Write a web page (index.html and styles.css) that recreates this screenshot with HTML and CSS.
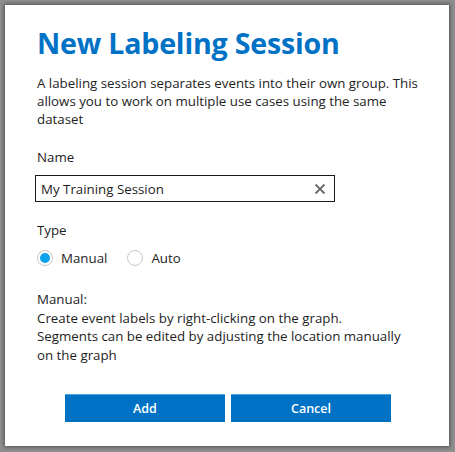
FILE: index.html
```html
<!DOCTYPE html>
<html>
<head>
<meta charset="utf-8">
<link rel="stylesheet" href="styles.css">
</head>
<body>
<div class="dialog">
  <h1 class="title">New Labeling Session</h1>
  <p class="desc">A labeling session separates events into their own group. This allows you to work on multiple use cases using the same dataset</p>
  <div class="field-label name-label">Name</div>
  <div class="input">
    <span class="input-text">My Training Session</span>
    <svg class="clear" width="12" height="12" viewBox="0 0 12 12"><path d="M1.5 1.5 L10.5 10.5 M10.5 1.5 L1.5 10.5" stroke="#6b6b6b" stroke-width="1.8" fill="none"/></svg>
  </div>
  <div class="field-label type-label">Type</div>
  <div class="radios">
    <label class="radio"><span class="circle checked"><span class="dot"></span></span>Manual</label>
    <label class="radio"><span class="circle"></span>Auto</label>
  </div>
  <div class="help">
    <div>Manual:</div>
    <div>Create event labels by right-clicking on the graph.</div>
    <div>Segments can be edited by adjusting the location manually on the graph</div>
  </div>
  <div class="buttons">
    <button class="btn">Add</button>
    <button class="btn">Cancel</button>
  </div>
</div>
</body>
</html>
```
FILE: styles.css
```css
html, body {
  margin: 0;
  padding: 0;
}
body {
  background: #8f8f8f;
  width: 455px;
  height: 452px;
  overflow: hidden;
  font-family: "Open Sans", "Noto Sans", sans-serif;
  color: #1e1e1e;
}
.dialog {
  margin: 5px 0 0 5px;
  width: 444px;
  height: 441px;
  box-sizing: border-box;
  background: #fff;
  box-shadow: 0 0 4px 1px rgba(0,0,0,0.45);
  padding: 18px 30px 0 32px;
}
.title {
  margin: 0;
  font-size: 28.6px;
  line-height: 40px;
  font-weight: 700;
  color: #0072c6;
  letter-spacing: -0.2px;
}
.desc {
  margin: 11px 0 0 0;
  font-size: 13.3px;
  line-height: 18px;
}
.field-label {
  font-size: 13.3px;
  line-height: 18px;
}
.name-label {
  margin-top: 20px;
}
.input {
  margin: 9px 0 0 -2px;
  width: 300px;
  height: 27px;
  box-sizing: border-box;
  border: 1px solid #1a1a1a;
  display: flex;
  align-items: center;
  justify-content: space-between;
  padding: 0 8px 0 5px;
  font-size: 13.3px;
}
.clear {
  display: block;
}
.type-label {
  margin-top: 19px;
}
.radios {
  margin-top: 10px;
  display: flex;
  gap: 20px;
  font-size: 13.3px;
  line-height: 18px;
}
.radio {
  display: flex;
  align-items: center;
  gap: 8px;
}
.circle {
  width: 16px;
  height: 16px;
  box-sizing: border-box;
  border: 1px solid #c8c8c8;
  border-radius: 50%;
  display: flex;
  align-items: center;
  justify-content: center;
}
.dot {
  width: 10px;
  height: 10px;
  border-radius: 50%;
  background: #0aa3ee;
}
.help {
  margin-top: 23px;
  font-size: 13.3px;
  line-height: 18.5px;
}
.buttons {
  margin-top: 30px;
  display: flex;
  gap: 6px;
  padding-left: 28px;
}
.btn {
  width: 160px;
  height: 28px;
  border: none;
  border-top: 1px solid #4d9fdc;
  background: #0072c6;
  color: #fff;
  font-family: "Open Sans", "Noto Sans", sans-serif;
  font-size: 12.5px;
  font-weight: 600;
  padding: 0;
}
```
